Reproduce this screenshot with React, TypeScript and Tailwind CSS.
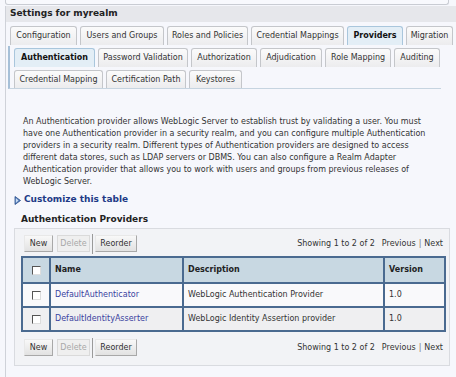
import { useState } from 'react';

const font = { fontFamily: 'Tahoma, "DejaVu Sans", sans-serif' };

type Tab = { label: string; w: number };

const mainTabs: Tab[] = [
  { label: 'Configuration', w: 67 },
  { label: 'Users and Groups', w: 84 },
  { label: 'Roles and Policies', w: 81 },
  { label: 'Credential Mappings', w: 93 },
  { label: 'Providers', w: 56 },
  { label: 'Migration', w: 47 },
];

const subTabs1: Tab[] = [
  { label: 'Authentication', w: 81 },
  { label: 'Password Validation', w: 90 },
  { label: 'Authorization', w: 66 },
  { label: 'Adjudication', w: 62 },
  { label: 'Role Mapping', w: 66 },
  { label: 'Auditing', w: 46 },
];

const subTabs2: Tab[] = [
  { label: 'Credential Mapping', w: 89 },
  { label: 'Certification Path', w: 80 },
  { label: 'Keystores', w: 53 },
];

function TabRow({ tabs, active, className }: { tabs: Tab[]; active: string; className?: string }) {
  return (
    <div className={`flex gap-[3px] ${className ?? ''}`}>
      {tabs.map(t => {
        const on = t.label === active;
        return (
          <div
            key={t.label}
            style={{ width: t.w }}
            className={`h-full flex items-center justify-center rounded-t-[3px] border border-b-0 text-[8px] whitespace-nowrap ${
              on
                ? 'bg-[#e3eef6] border-[#a9c6dc] font-bold text-[#111]'
                : 'bg-gradient-to-b from-[#fbfbfb] to-[#ececee] border-[#c4c6ca] text-[#333]'
            }`}
          >
            {t.label}
          </div>
        );
      })}
    </div>
  );
}

function Btn({ label, disabled, w }: { label: string; disabled?: boolean; w: number }) {
  return (
    <div
      style={{ width: w }}
      className={`h-[17px] flex items-center justify-center text-[8px] border ${
        disabled
          ? 'text-[#a8a8a8] bg-[#efefef] border-[#dadada]'
          : 'text-[#333] bg-gradient-to-b from-[#f8f8f8] to-[#e2e2e2] border-t-[#e8e8e8] border-l-[#e8e8e8] border-r-[#a8a8a8] border-b-[#a8a8a8]'
      }`}
    >
      {label}
    </div>
  );
}

function Toolbar() {
  return (
    <div className="flex items-center h-[17px] pl-[9px] pr-[6px]">
      <Btn label="New" w={29} />
      <div className="w-[4px]" />
      <Btn label="Delete" disabled w={33} />
      <div className="w-[1px] h-[20px] bg-[#9a9a9a] mx-[2px]" />
      <Btn label="Reorder" w={42} />
      <div className="ml-auto text-[8px] text-[#333] flex items-center">
        <span>Showing 1 to 2 of 2</span>
        <span className="ml-[7px]">Previous</span>
        <span className="mx-[3px] text-[#777]">|</span>
        <span>Next</span>
      </div>
    </div>
  );
}

function CheckBox() {
  return (
    <div className="w-[9px] h-[9px] border border-t-[#555] border-l-[#555] border-r-[#ddd] border-b-[#ddd] bg-white" />
  );
}

export default function App() {
  const [rows] = useState([
    { name: 'DefaultAuthenticator', desc: 'WebLogic Authentication Provider', ver: '1.0' },
    { name: 'DefaultIdentityAsserter', desc: 'WebLogic Identity Assertion provider', ver: '1.0' },
  ]);

  return (
    <div style={font} className="w-[456px] h-[377px] overflow-hidden bg-[#f6f7fc] text-[#222]">
      {/* bottom edge of the box above */}
      <div className="h-[6px] pl-[5px]">
        <div className="w-[444px] h-[5px] border-x border-b border-[#c9ccd3] rounded-b-[3px] bg-[#f8f9fd]" />
      </div>

      <div className="ml-[5px] border-l border-[#cfd2d9] h-[371px]">
        <div className="h-[16px] bg-[#e6e7eb] flex items-center pl-[4px] text-[9px] font-bold text-[#222]">
          Settings for myrealm
        </div>

        <TabRow tabs={mainTabs} active="Providers" className="h-[19px] mt-[4px] pl-[4px]" />

        <div className="ml-[2px] mt-[1px] w-[433px] border-l-2 border-b border-l-[#a6c0d8] border-b-[#c6d4e0] pt-[2px]">
          <TabRow tabs={subTabs1} active="Authentication" className="h-[19px] pl-[4px]" />
          <TabRow tabs={subTabs2} active="" className="h-[18px] mt-[3px] pl-[4px]" />
        </div>

        <p className="mt-[27px] pl-[17px] pr-[22px] text-[8px] leading-[12px] text-[#333]">
          An Authentication provider allows WebLogic Server to establish trust by validating a user. You must
          have one Authentication provider in a security realm, and you can configure multiple Authentication
          providers in a security realm. Different types of Authentication providers are designed to access
          different data stores, such as LDAP servers or DBMS. You can also configure a Realm Adapter
          Authentication provider that allows you to work with users and groups from previous releases of
          WebLogic Server.
        </p>

        <div className="mt-[6px] pl-[8px] flex items-center h-[12px] gap-[3px]">
          <svg width="7" height="9" viewBox="0 0 7 9">
            <path d="M1 0.5 L6.5 4.5 L1 8.5 Z" fill="#4f79b8" stroke="#2a4f8a" strokeWidth="0.8" />
            <path d="M1.8 2 L4.5 4.5 L1.8 7 Z" fill="#c9dcf2" />
          </svg>
          <span className="text-[9px] font-bold text-[#213a86]">Customize this table</span>
        </div>

        <div className="mt-[8px] pl-[15px] h-[12px] flex items-center text-[9px] font-bold text-[#222]">
          Authentication Providers
        </div>

        <div className="ml-[8px] mt-[2px] w-[436px] h-[138px] border border-[#d9dbe0] bg-[#f2f3f6] pt-[6px]">
          <Toolbar />

          <table className="ml-[6px] mt-[4px] w-[423px] border-collapse border-2 border-[#4a6a90] text-[8px] table-fixed">
            <colgroup>
              <col style={{ width: 28 }} />
              <col style={{ width: 133 }} />
              <col style={{ width: 201 }} />
              <col style={{ width: 61 }} />
            </colgroup>
            <thead>
              <tr className="h-[26px] bg-[#c8d8e2]">
                <th className="border-2 border-[#4a6a90]">
                  <div className="flex justify-center"><CheckBox /></div>
                </th>
                <th className="border-2 border-[#4a6a90] text-left pl-[4px] font-bold text-[#222]">Name</th>
                <th className="border-2 border-[#4a6a90] text-left pl-[4px] font-bold text-[#222]">Description</th>
                <th className="border-2 border-[#4a6a90] text-left pl-[4px] font-bold text-[#222]">Version</th>
              </tr>
            </thead>
            <tbody>
              {rows.map((r, i) => (
                <tr key={r.name} className={`h-[24px] ${i % 2 ? 'bg-[#efeff1]' : 'bg-[#f9f9fb]'}`}>
                  <td className="border-2 border-[#4a6a90]">
                    <div className="flex justify-center"><CheckBox /></div>
                  </td>
                  <td className="border-2 border-[#4a6a90] pl-[4px] text-[#3a3fa0]">{r.name}</td>
                  <td className="border-2 border-[#4a6a90] pl-[4px] text-[#333]">{r.desc}</td>
                  <td className="border-2 border-[#4a6a90] pl-[4px] text-[#333]">{r.ver}</td>
                </tr>
              ))}
            </tbody>
          </table>

          <div className="mt-[7px]">
            <Toolbar />
          </div>
        </div>
      </div>
    </div>
  );
}
